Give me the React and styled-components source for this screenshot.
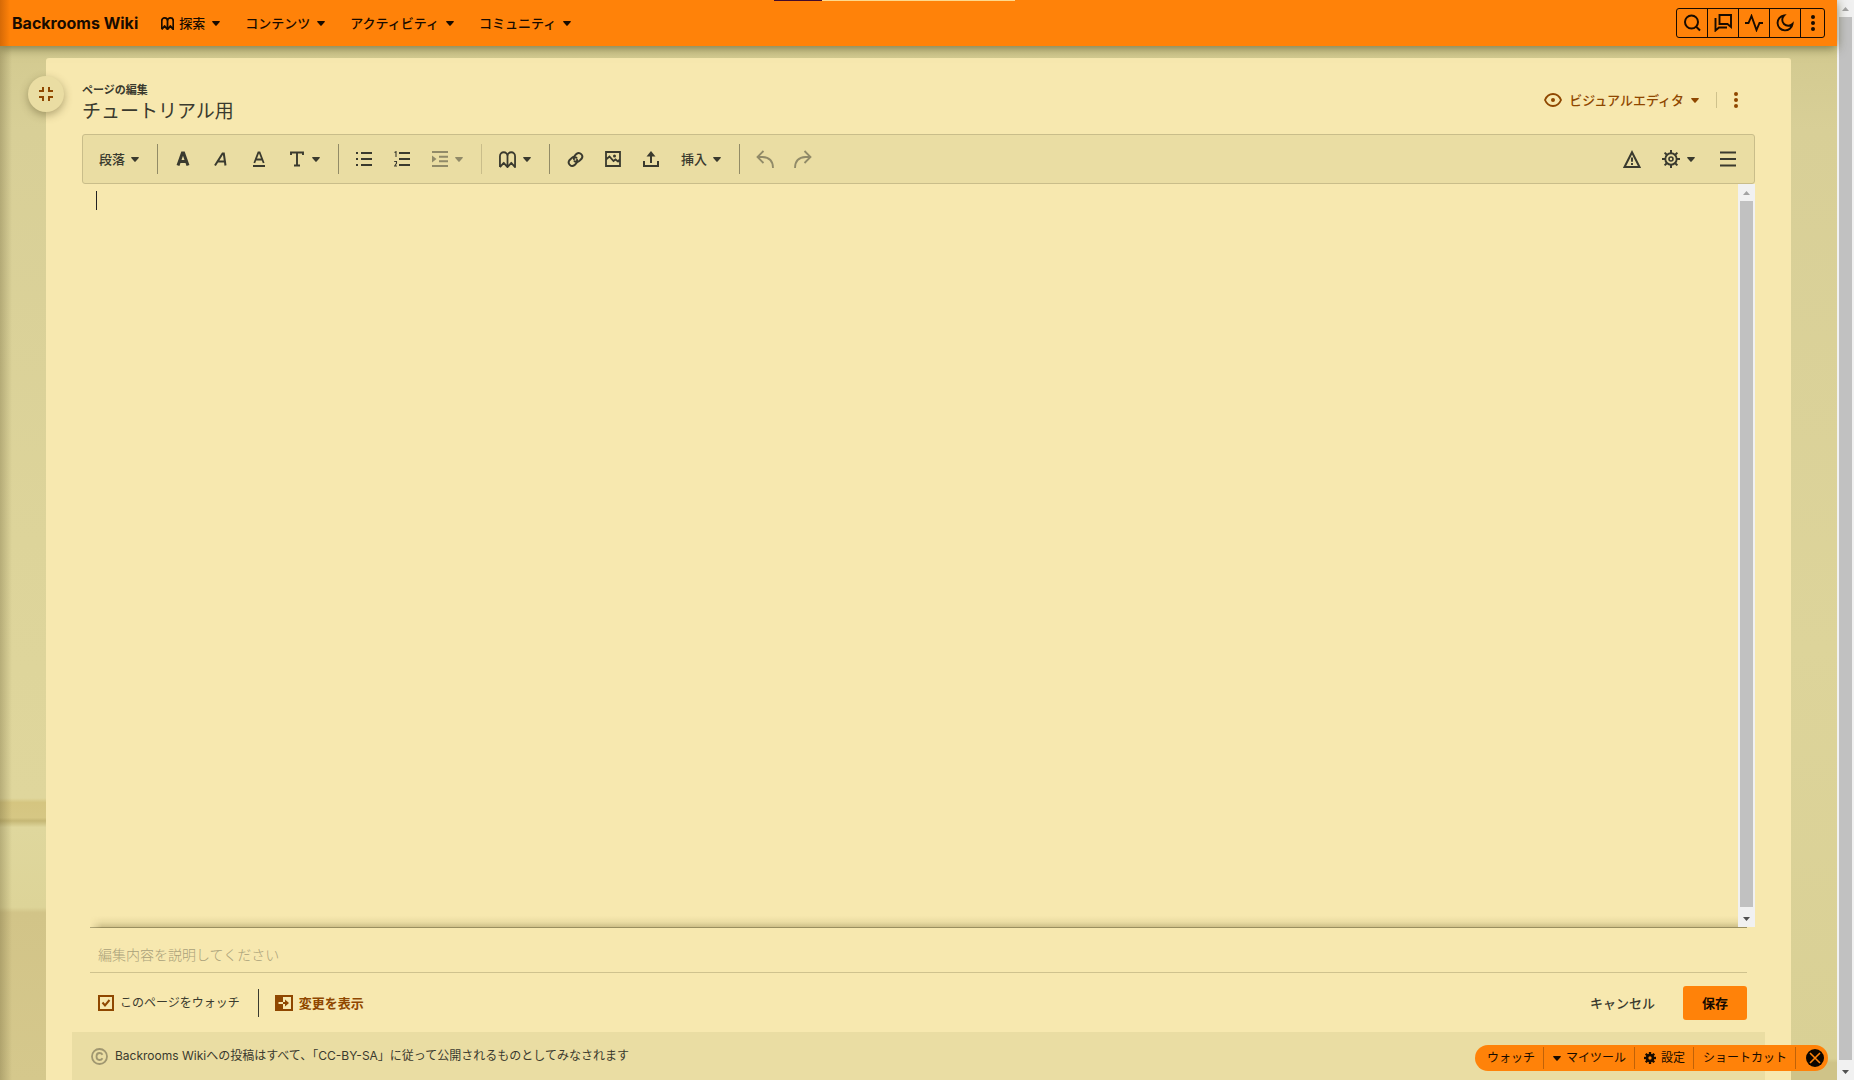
import React from "react";
import styled, { createGlobalStyle, css } from "styled-components";

const ink = "#3a3a2e";
const accent = "#8f4700";
const orange = "#ff8209";
const paper = "#f7e8af";
const panel = "#eadda3";

const GlobalStyle = createGlobalStyle`
  *, *::before, *::after { box-sizing: border-box; }
  html, body, #root { height: 100%; }
  body {
    margin: 0;
    overflow: hidden;
    color: ${ink};
    font-family: Inter, "Noto Sans CJK JP", sans-serif;
    font-size: 13px;
    line-height: 20px;
  }
  button, input, textarea { font: inherit; color: inherit; }
  button { padding: 0; border: 0; background: none; cursor: pointer; white-space: nowrap; }
  svg { display: block; flex: none; }
`;

/* ---------- shell ---------- */

const Shell = styled.div`
  display: flex;
  height: 100vh;
`;

const Page = styled.div`
  position: relative;
  flex: 1;
  min-width: 0;
  display: flex;
  flex-direction: column;
  background:
    linear-gradient(90deg, rgba(90, 80, 40, 0.3), rgba(90, 80, 40, 0) 12px),
    linear-gradient(#d0c78c, #d8cf97 12%, #ddd49a 60%, #d9d095 98%, #cfc388 98.4%) right / 50% 100% no-repeat,
    linear-gradient(#d0c78c 0, #d8cf97 12%, #ddd49a 50%, #dfd69c 73.9%, #d5c580 74.3%, #d6c784 75.7%, #c5b775 76%, #dfd79d 76.6%, #ddd498 84%, #d2c488 84.5%, #d5c88c 100%);
`;

const TopBar = styled.header`
  position: relative;
  z-index: 3;
  flex: none;
  display: flex;
  align-items: center;
  height: 46px;
  padding: 0 12px 0 12px;
  color: #180b00;
  background: linear-gradient(90deg, rgba(120, 50, 0, 0.3), transparent 10px), ${orange};
  box-shadow: 0 2px 10px rgba(60, 60, 20, 0.6);
`;

const Progress = styled.div`
  position: absolute;
  top: 0;
  left: 50%;
  width: 241px;
  height: 1px;
  margin-left: -145px;
  background: linear-gradient(90deg, #430a2c 48px, #ffd98c 48px);
`;

const Brand = styled.a`
  margin-right: 23px;
  color: inherit;
  font-size: 16px;
  font-weight: 700;
  text-decoration: none;
  white-space: nowrap;
`;

const Nav = styled.nav`
  display: flex;
  gap: 25px;
  flex: 1;
`;

const NavItem = styled.button`
  display: flex;
  align-items: center;
  gap: 7px;
  font-weight: 500;
`;

const IconLabel = styled.span`
  display: flex;
  align-items: center;
  gap: 5px;
`;

const Tools = styled.div`
  display: flex;
  height: 30px;
  border: 1px solid #180b00;
  border-radius: 3px;
`;

const Tool = styled.button`
  display: grid;
  place-items: center;
  width: ${(p) => (p.$narrow ? 24 : 31)}px;
  & + & { border-left: 1px solid #180b00; }
  &:first-child { width: 30px; }
`;

const Scrollbar = styled.div`
  position: relative;
  z-index: 2;
  flex: none;
  display: flex;
  flex-direction: column;
  align-items: center;
  width: 17px;
  background: #f1f1f1;
`;

const Arrow = styled.span`
  flex: none;
  display: grid;
  place-items: center;
  height: 17px;
`;

const Thumb = styled.div`
  flex: 1;
  width: 13px;
  margin-bottom: ${(p) => p.$rest}px;
  background: #c1c1c1;
`;

/* ---------- card ---------- */

const Main = styled.main`
  flex: 1;
  min-height: 0;
  display: flex;
  padding: 12px 46px 0;
`;

const Card = styled.section`
  position: relative;
  flex: 1;
  min-width: 0;
  display: flex;
  flex-direction: column;
  border-radius: 3px 3px 0 0;
  background: ${paper};
`;

const Collapse = styled.button`
  position: absolute;
  top: 18px;
  left: -18px;
  display: grid;
  place-items: center;
  width: 36px;
  height: 36px;
  border-radius: 50%;
  color: ${accent};
  background: ${panel};
  box-shadow: 0 3px 8px rgba(90, 80, 40, 0.45);
`;

const CardHead = styled.div`
  display: flex;
  justify-content: space-between;
  padding: 25px 36px 11px;
`;

const Kicker = styled.div`
  margin-bottom: 4px;
  font-size: 11px;
  font-weight: 700;
  line-height: 14px;
`;

const Title = styled.h1`
  margin: 0;
  font-size: 19px;
  font-weight: 400;
  line-height: 22px;
`;

const ModeBar = styled.div`
  display: flex;
  align-items: center;
  height: 34px;
  color: ${accent};
`;

const Mode = styled.button`
  display: flex;
  align-items: center;
  gap: 7px;
  height: 34px;
  padding-right: 17px;
  font-weight: 500;
`;

const More = styled.button`
  display: grid;
  place-items: center;
  width: 39px;
  height: 16px;
  border-left: 1px solid #cfc28c;
`;

const Toolbar = styled.div`
  display: flex;
  align-items: center;
  height: 50px;
  margin: 0 36px;
  padding: 0 7px 0 5px;
  border: 1px solid #c9bd8a;
  border-radius: 3px;
  background: ${panel};
`;

const ToolButton = styled.button`
  display: flex;
  align-items: center;
  justify-content: center;
  gap: ${(p) => (p.$text ? 6 : 7)}px;
  width: ${(p) => (p.$menu ? "auto" : "38px")};
  height: 38px;
  padding: 0 ${(p) => (p.$menu ? 11 : 0)}px;
  font-weight: 500;
  ${(p) => p.$off && css`opacity: 0.5; cursor: default;`}
`;

const Rule = styled.span`
  width: 1px;
  height: 30px;
  margin: 0 6px 0 7px;
  background: ${(p) => (p.$soft ? "#c9bd8a" : "#928b66")};
`;

const Spacer = styled.span`
  flex: 1;
`;

const Gap = styled.span`
  width: 3px;
`;

const Editor = styled.div`
  position: relative;
  flex: 1;
  min-height: 0;
  display: flex;
  margin: 0 36px;
`;

const TextArea = styled.textarea`
  flex: 1;
  resize: none;
  padding: 7px 14px;
  border: 0;
  outline: 0;
  overflow: hidden;
  background: transparent;
`;

const Caret = styled.span`
  position: absolute;
  top: 7px;
  left: 14px;
  width: 1px;
  height: 19px;
  background: #222;
`;

const Summary = styled.div`
  position: relative;
  margin: 0 44px;
  border: solid #cfc28e;
  border-width: 1px 0;
  border-top-color: #b3a87a;
  &::before {
    content: "";
    position: absolute;
    right: 0;
    bottom: 100%;
    left: 0;
    height: 12px;
    background: linear-gradient(rgba(90, 80, 30, 0), rgba(90, 80, 30, 0.08) 50%, rgba(90, 80, 30, 0.3));
    mask-image: linear-gradient(90deg, transparent, #000 12px);
    pointer-events: none;
  }
`;

const SummaryInput = styled.input`
  display: block;
  width: 100%;
  height: 44px;
  padding: 8px 8px 0;
  border: 0;
  outline: 0;
  background: transparent;
  font-size: 14px;
  &::placeholder { color: #a9a079; opacity: 1; font-weight: 300; }
`;

const Actions = styled.div`
  display: flex;
  align-items: center;
  height: 59px;
  padding: 0 44px 0 52px;
`;

const Watch = styled.label`
  display: flex;
  align-items: center;
  gap: 6px;
  font-size: 12px;
`;

const CheckWrap = styled.span`
  display: grid;
  place-items: center;
  color: ${accent};
  & > * { grid-area: 1 / 1; }
  & > svg { pointer-events: none; }
`;

const Check = styled.input`
  appearance: none;
  width: 16px;
  height: 16px;
  margin: 0;
  border: 2px solid ${accent};
`;

const Divider = styled.span`
  width: 1px;
  height: 28px;
  margin: 0 16px 0 18px;
  background: ${ink};
`;

const Changes = styled.button`
  display: flex;
  align-items: center;
  gap: 6px;
  color: ${accent};
  font-weight: 700;
`;

const Cancel = styled.button`
  margin-right: 28px;
  font-weight: 500;
`;

const Save = styled.button`
  width: 64px;
  height: 34px;
  border-radius: 3px;
  color: #180b00;
  background: ${orange};
  font-weight: 700;
`;

const License = styled.footer`
  display: flex;
  align-items: center;
  gap: 7px;
  height: 48px;
  margin: 0 26px;
  padding: 0 19px;
  background: ${panel};
  font-size: 12px;
`;

/* ---------- floating bar ---------- */

const FloatBar = styled.div`
  position: absolute;
  right: 9px;
  bottom: 9px;
  z-index: 4;
  display: flex;
  align-items: center;
  height: 26px;
  padding-right: 4px;
  border-radius: 13px;
  color: #180b00;
  background: ${orange};
`;

const FloatItem = styled.button`
  display: flex;
  align-items: center;
  gap: 5px;
  height: 22px;
  padding: 0 8px 0 ${(p) => (p.$wide ? 12 : 9)}px;
  border-right: 1px solid #c06208;
  font-size: 12px;
`;

const Close = styled.button`
  display: grid;
  place-items: center;
  width: 18px;
  height: 18px;
  margin-left: 10px;
  border-radius: 50%;
  color: ${orange};
  background: #0d0600;
`;

/* ---------- icons ---------- */

const Icon = ({ size = 18, box = 18, w = 2, children }) => (
  <svg width={size} height={size} viewBox={`0 0 ${box} ${box}`} fill="none" stroke="currentColor" strokeWidth={w} aria-hidden="true">
    {children}
  </svg>
);

const Down = () => (
  <svg width="8" height="5" viewBox="0 0 8 5" aria-hidden="true">
    <path d="M0.7 0h6.6q.9.2.4.9L4.6 4.6q-.6.6-1.2 0L.3.9Q-.2.2.7 0z" fill="currentColor" />
  </svg>
);

const ScrollTri = ({ up }) => (
  <svg width="7" height="4" viewBox="0 0 7 4" aria-hidden="true">
    <path d={up ? "M0 4 3.5 0 7 4z" : "M0 0h7L3.5 4z"} fill={up ? "#a3a3a3" : "#505050"} />
  </svg>
);

const Dots = () => (
  <svg width="4" height="16" viewBox="0 0 4 16" fill="currentColor" aria-hidden="true">
    <circle cx="2" cy="2" r="2" /><circle cx="2" cy="8" r="2" /><circle cx="2" cy="14" r="2" />
  </svg>
);

const Book = ({ size, w = 1.9 }) => (
  <Icon size={size}>
    <path d="M1 17V5.500a4 4.200 0 0 1 8 0 4 4.200 0 0 1 8 0V17L13 12.500 9 17 5 12.500 1 17M9 5V17" strokeWidth={w} strokeLinejoin="round" />
  </Icon>
);

const Bars = ({ x }) => <path d={`M${x} 2h${16 - x}M${x} 8h${16 - x}M${x} 14h${16 - x}`} />;

const Bold = () => <Icon size={16} box={16}><path d="M3 14.5 7.4 2h1.2L13 14.5M4.5 10.5h7" strokeWidth="3" /></Icon>;
const Italic = () => <Icon size={16} box={16}><path d="M2 14.5 9.6 2.5h1.2L12.5 14.5M5 10.5h7" /></Icon>;
const Under = () => <Icon size={16} box={16}><path d="M2 15h12M3.3 12 7.4 1.5h1.2L12.7 12M5 8.5h6" strokeWidth="1.8" /></Icon>;
const TextStyle = () => <Icon size={16} box={16}><path d="M2 4V1.5h12V4M8 1.5V14M5 14.5h6" strokeWidth="1.9" /></Icon>;
const Bullets = () => <Icon size={16} box={16}><Bars x={5} /><path d="M0 2h2M0 8h2M0 14h2" /></Icon>;
const Numbers = () => (
  <Icon size={16} box={16}><Bars x={5} /><path d="M.5 1.5 2 .7V6M.2 10.5h2.3V12.300L.6 15h2.4" strokeWidth="1.1" /></Icon>
);
const Indent = () => (
  <Icon size={16} box={16}><path d="M0 1h16M7 5.700h9M7 10.300h9M0 15h16" /><path d="M0 4.500 4.500 8 0 11.500z" fill="currentColor" stroke="none" /></Icon>
);
const Chain = () => (
  <Icon size={17} box={24} w={2.800}>
    <path d="M10 13.500a5 5 0 0 0 7.500.5l3-3a5 5 0 0 0-7-7l-2.500 2.500a5 5 0 0 0-.5 6" />
    <path d="M14 10.500a5 5 0 0 0-7.500-.5l-3 3a5 5 0 0 0 7 7l2.500-2.500a5 5 0 0 0 .5-6" />
  </Icon>
);
const Picture = () => (
  <Icon size={16} box={16}><path d="M1 1h14v14H1zM1 8.500 4.500 5.500 8.500 10l2-1.500L13 10.500 15 8" strokeWidth="1.800" /><circle cx="9.500" cy="5" r="1.500" fill="currentColor" stroke="none" /></Icon>
);
const Upload = () => (
  <Icon size={16} box={16}><path d="M1 10v5h14v-5M8 12V3" /><path d="M3.500 5.500 8 0l4.500 5.500z" fill="currentColor" stroke="none" /></Icon>
);
const Undo = ({ flip }) => (
  <Icon><g transform={flip ? "translate(18 0) scale(-1 1)" : undefined}><path d="M7.500 1 1.500 7l6 6M2 7h4.500Q17 7.500 17 18" strokeWidth="1.800" /></g></Icon>
);
const Warning = () => (
  <Icon><path d="M9 2.200 16.500 17h-15z" /><path d="M9 7.500v4.200M9 13v2" strokeWidth="1.900" /></Icon>
);
const gearTeeth = [0, 45, 90, 135, 180, 225, 270, 315];
const Gear = () => (
  <Icon size={18}>
    <circle cx="9" cy="9" r="5.700" strokeWidth="1.900" /><circle cx="9" cy="9" r="2" strokeWidth="1.600" />
    {gearTeeth.map((a) => <path key={a} d="M9 0v3" transform={`rotate(${a} 9 9)`} />)}
  </Icon>
);
const GearSolid = () => (
  <Icon size={12}>
    <circle cx="9" cy="9" r="4.500" strokeWidth="4" />
    {gearTeeth.map((a) => <path key={a} d="M9 0v4" strokeWidth="3.500" transform={`rotate(${a} 9 9)`} />)}
  </Icon>
);
const Menu = () => <Icon size={16} box={16}><path d="M0 1.500h16M0 8h16M0 14.500h16" strokeWidth="1.800" /></Icon>;
const Eye = () => (
  <svg width="18" height="14" viewBox="0 0 18 14" fill="none" stroke="currentColor" strokeWidth="1.900" aria-hidden="true">
    <path d="M1 7Q3.500 1 9 1t8 6q-2.500 6-8 6T1 7z" /><circle cx="9" cy="7" r="2" fill="currentColor" stroke="none" />
  </svg>
);
const Search = () => <Icon><circle cx="8.500" cy="8" r="6.500" /><path d="m13 12.500 4 4" /></Icon>;
const Talk = () => (
  <Icon><path d="M5.500 1H17v12l-3.500-3h-8zM1.500 4v12.500L5 13.500h8" strokeWidth="1.900" /></Icon>
);
const Pulse = () => <Icon><path d="M0 9h3.500L6.500 2l5 14L14.500 9H18" strokeWidth="1.900" /></Icon>;
const Moon = () => <Icon><path d="M8 1.500A7.500 7.500 0 1 0 16.500 10 5.500 5.500 0 0 1 8 1.500z" strokeWidth="1.900" /></Icon>;
const Shrink = () => (
  <Icon size={16} box={16}><path d="M1 5h4V1M15 5h-4V1M1 11h4v4M15 11h-4v4" /></Icon>
);
const Tick = () => <Icon size={10} box={10}><path d="m1.500 4.500 2.500 3 4.500-5.500" /></Icon>;
const Diff = () => (
  <Icon size={18}><path d="M1 2h16v14H1z" /><path d="M0 1h8v16H0z" fill="currentColor" stroke="none" /><path d="M3.500 9H8" stroke={paper} strokeWidth="2" /><path d="M8 9h3" /><path d="M10 5.500 14 9l-4 3.500z" fill="currentColor" stroke="none" /></Icon>
);
const Copyright = () => (
  <Icon size={17} box={17} w={1.800}><g stroke="#a09770"><circle cx="8.500" cy="8.500" r="7.500" /><path d="M11.500 6.800Q10.500 5 8.500 5 5.500 5 5.500 8.500T8.500 12q2 0 3-1.800" /></g></Icon>
);
const Cross = () => <Icon size={12} box={12} w={1.600}><path d="m1 1 10 10M11 1 1 11" /></Icon>;

/* ---------- page ---------- */

const navItems = ["コンテンツ", "アクティビティ", "コミュニティ"];
const topTools = [["検索", Search], ["ディスカッション", Talk], ["最近の更新", Pulse], ["ダークテーマ", Moon], ["その他", Dots]];

const toolbarItems = [
  { text: "段落", menu: true }, "rule",
  { name: "太字", icon: Bold }, { name: "斜体", icon: Italic }, { name: "下線", icon: Under },
  { name: "文字スタイル", icon: TextStyle, menu: true }, "rule",
  { name: "箇条書き", icon: Bullets }, { name: "番号付き", icon: Numbers },
  { name: "インデント", icon: Indent, menu: true, off: true }, "soft",
  { name: "参照", icon: Book, size: 17, menu: true }, "rule",
  { name: "リンク", icon: Chain }, { name: "画像", icon: Picture }, { name: "アップロード", icon: Upload },
  { text: "挿入", menu: true }, "rule",
  { name: "元に戻す", icon: Undo, off: true }, { name: "やり直す", icon: Undo, off: true, flip: true },
  "space",
  { name: "通知", icon: Warning }, { name: "オプション", icon: Gear, menu: true }, "gap", { name: "メニュー", icon: Menu },
];

const ToolbarEntry = ({ item }) => {
  if (item === "rule") return <Rule />;
  if (item === "soft") return <Rule $soft />;
  if (item === "space") return <Spacer />;
  if (item === "gap") return <Gap />;
  const Glyph = item.icon;
  return (
    <ToolButton type="button" $text={!!item.text} $menu={item.menu} $off={item.off} disabled={item.off} aria-label={item.text ? undefined : item.name} aria-haspopup={item.menu ? "menu" : undefined}>
      {item.text}
      {Glyph && <Glyph size={item.size} flip={item.flip} />}
      {item.menu && <Down />}
    </ToolButton>
  );
};

const FakeScroll = ({ rest }) => (
  <Scrollbar aria-hidden="true">
    <Arrow><ScrollTri up /></Arrow>
    <Thumb $rest={rest} />
    <Arrow><ScrollTri /></Arrow>
  </Scrollbar>
);

export default function App() {
  return (
    <Shell>
      <GlobalStyle />
      <Page>
        <TopBar>
          <Progress />
          <Brand href="#home">Backrooms Wiki</Brand>
          <Nav>
            <NavItem type="button" aria-haspopup="menu"><IconLabel><Book size={13} w={2.5} />探索</IconLabel><Down /></NavItem>
            {navItems.map((t) => <NavItem key={t} type="button" aria-haspopup="menu">{t}<Down /></NavItem>)}
          </Nav>
          <Tools>
            {topTools.map(([name, Glyph]) => <Tool key={name} type="button" aria-label={name} $narrow={Glyph === Dots}><Glyph /></Tool>)}
          </Tools>
        </TopBar>
        <Main>
          <Card>
            <Collapse type="button" aria-label="折りたたむ"><Shrink /></Collapse>
            <CardHead>
              <div>
                <Kicker>ページの編集</Kicker>
                <Title>チュートリアル用</Title>
              </div>
              <ModeBar>
                <Mode type="button" aria-haspopup="menu"><Eye />ビジュアルエディタ<Down /></Mode>
                <More type="button" aria-label="その他の操作"><Dots /></More>
              </ModeBar>
            </CardHead>
            <Toolbar role="toolbar">
              {toolbarItems.map((item, i) => <ToolbarEntry key={i} item={item} />)}
            </Toolbar>
            <Editor>
              <TextArea aria-label="本文" />
              <Caret />
              <FakeScroll rest={3} />
            </Editor>
            <Summary>
              <SummaryInput aria-label="編集内容" placeholder="編集内容を説明してください" />
            </Summary>
            <Actions>
              <Watch>
                <CheckWrap><Check type="checkbox" defaultChecked /><Tick /></CheckWrap>
                このページをウォッチ
              </Watch>
              <Divider />
              <Changes type="button"><Diff />変更を表示</Changes>
              <Spacer />
              <Cancel type="button">キャンセル</Cancel>
              <Save type="button">保存</Save>
            </Actions>
            <License>
              <Copyright />
              <span>Backrooms Wikiへの投稿はすべて、「CC-BY-SA」に従って公開されるものとしてみなされます</span>
            </License>
          </Card>
        </Main>
        <FloatBar>
          <FloatItem type="button" $wide>ウォッチ</FloatItem>
          <FloatItem type="button" aria-haspopup="menu"><Down />マイツール</FloatItem>
          <FloatItem type="button"><GearSolid />設定</FloatItem>
          <FloatItem type="button">ショートカット</FloatItem>
          <Close type="button" aria-label="閉じる"><Cross /></Close>
        </FloatBar>
      </Page>
      <FakeScroll rest={3} />
    </Shell>
  );
}
